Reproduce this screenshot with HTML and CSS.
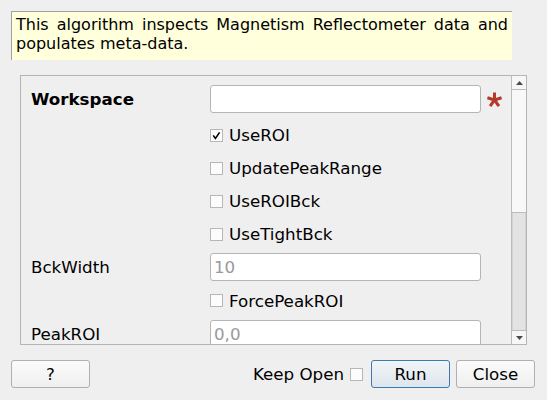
FILE: index.html
```html
<!DOCTYPE html>
<html>
<head>
<meta charset="utf-8">
<link rel="stylesheet" href="styles.css">
</head>
<body>
<div class="desc">This algorithm inspects Magnetism Reflectometer data and populates meta-data.</div>
<div class="frame">
  <div class="content">
    <div class="row row-main">
      <div class="label bold">Workspace</div>
      <div class="input"></div>
      <svg class="star" width="15" height="15" viewBox="0 0 15 15"><g stroke="#b23a2c" stroke-width="3" stroke-linecap="butt"><line x1="7.5" y1="8" x2="7.5" y2="0.5"/><line x1="7.5" y1="8" x2="14.6" y2="5.7"/><line x1="7.5" y1="8" x2="11.9" y2="14.1"/><line x1="7.5" y1="8" x2="3.1" y2="14.1"/><line x1="7.5" y1="8" x2="0.4" y2="5.7"/></g></svg>
    </div>
    <div class="row">
      <div class="label"></div>
      <div class="check"><span class="box"><svg width="11" height="11" viewBox="0 0 11 11"><path d="M2.2 5.4 L4.4 8.4 L8.6 2.4" fill="none" stroke="#000" stroke-width="1.6"/></svg></span>UseROI</div>
    </div>
    <div class="row">
      <div class="label"></div>
      <div class="check"><span class="box"></span>UpdatePeakRange</div>
    </div>
    <div class="row">
      <div class="label"></div>
      <div class="check"><span class="box"></span>UseROIBck</div>
    </div>
    <div class="row">
      <div class="label"></div>
      <div class="check"><span class="box"></span>UseTightBck</div>
    </div>
    <div class="row">
      <div class="label">BckWidth</div>
      <div class="input"><span class="ph">10</span></div>
    </div>
    <div class="row">
      <div class="label"></div>
      <div class="check"><span class="box"></span>ForcePeakROI</div>
    </div>
    <div class="row">
      <div class="label">PeakROI</div>
      <div class="input"><span class="ph">0,0</span></div>
    </div>
  </div>
  <div class="scrollbar">
    <div class="sb-btn sb-up"><svg width="7" height="4" viewBox="0 0 7 4"><polygon points="0,4 7,4 3.5,0" fill="#4a4a4a"/></svg></div>
    <div class="sb-handle"></div>
    <div class="sb-track"></div>
    <div class="sb-btn sb-down"><svg width="7" height="4" viewBox="0 0 7 4"><polygon points="0,0 7,0 3.5,4" fill="#4a4a4a"/></svg></div>
  </div>
</div>
<div class="footer">
  <button class="btn">?</button>
  <div class="spacer"></div>
  <span class="keep">Keep Open</span>
  <span class="box keep-box"></span>
  <button class="btn btn-default">Run</button>
  <button class="btn">Close</button>
</div>
</body>
</html>
```

FILE: styles.css
```css
html, body {
  margin: 0;
  padding: 0;
  background: #efefef;
  width: 547px;
  height: 400px;
  overflow: hidden;
  font-family: "DejaVu Sans", sans-serif;
  color: #000;
}

body {
  padding: 11px 0 0 11px;
  box-sizing: border-box;
}

.desc {
  width: 501px;
  height: 49px;
  box-sizing: border-box;
  background: #ffffdc;
  border-top: 1px solid #a0a0a0;
  border-left: 1px solid #a0a0a0;
  padding: 3px 4px 0 4px;
  font-size: 16px;
  line-height: 19px;
  text-align: justify;
}

.frame {
  margin: 15px 0 0 9px;
  width: 507px;
  height: 270px;
  box-sizing: border-box;
  border: 1px solid #b4b4b4;
  display: flex;
}

.content {
  flex: 1;
  overflow: hidden;
  padding: 9px 0 0 10px;
  display: flex;
  flex-direction: column;
  gap: 5.1px;
  font-size: 16.7px;
}

.row {
  display: flex;
  align-items: center;
  height: 28px;
  flex-shrink: 0;
}

.row-main {
  margin-bottom: 3px;
}

.label {
  width: 179px;
  flex-shrink: 0;
  color: #000;
}

.bold {
  font-weight: bold;
}

.input {
  width: 271px;
  height: 28px;
  box-sizing: border-box;
  background: #fff;
  border: 1px solid #b5b5b5;
  border-radius: 3px;
  padding-left: 3px;
  display: flex;
  align-items: center;
  flex-shrink: 0;
}

.ph {
  color: #9a9a9a;
}

.star {
  margin-left: 6px;
  margin-top: 1px;
}

.check {
  display: flex;
  align-items: center;
  gap: 6px;
}

.box {
  width: 13px;
  height: 13px;
  box-sizing: border-box;
  border: 1px solid #b7b7b7;
  background: #fcfcfc;
  display: inline-flex;
  align-items: center;
  justify-content: center;
  flex-shrink: 0;
}

.scrollbar {
  width: 14px;
  border-left: 1px solid #bcbcbc;
  display: flex;
  flex-direction: column;
  flex-shrink: 0;
}

.sb-btn {
  height: 13px;
  background: #f7f7f7;
  display: flex;
  align-items: center;
  justify-content: center;
  flex-shrink: 0;
}

.sb-up {
  border-bottom: 1px solid #bcbcbc;
}

.sb-down {
  border-top: 1px solid #bcbcbc;
}

.sb-handle {
  height: 122px;
  background: #f8f8f8;
  border-bottom: 1px solid #bcbcbc;
  flex-shrink: 0;
}

.sb-track {
  flex: 1;
  background: #e3e3e3;
  border-left: 1px solid #d3d3d3;
  border-right: 1px solid #d3d3d3;
}

.footer {
  margin-top: 15px;
  width: 524px;
  display: flex;
  align-items: center;
  font-size: 16.7px;
}

.spacer {
  flex: 1;
}

.btn {
  font-family: "DejaVu Sans", sans-serif;
  font-size: 16.7px;
  color: #000;
  width: 79px;
  height: 28px;
  padding: 0;
  border: 1px solid #b0b0b0;
  border-radius: 3px;
  background: linear-gradient(#fbfbfb, #efefef);
}

.btn + .btn {
  margin-left: 6px;
}

.btn-default {
  border-color: #3b79ae;
  background: linear-gradient(#f1f5f8, #dde5ec);
}

.keep {
  margin-right: 6px;
}

.keep-box {
  margin-right: 8px;
}
```
